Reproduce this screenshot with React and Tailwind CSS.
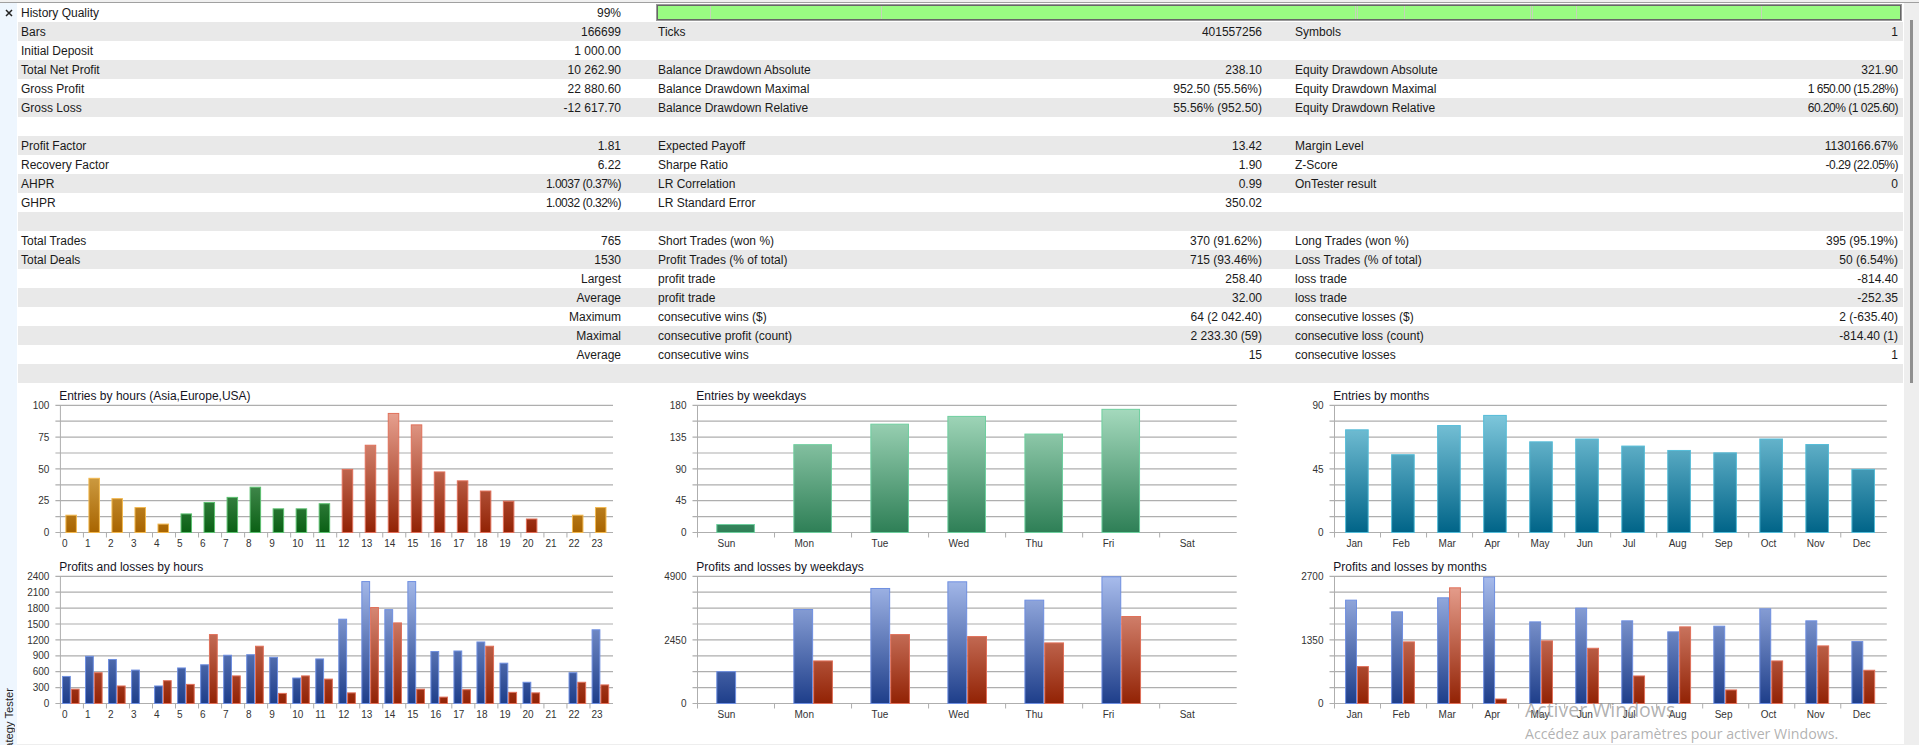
const rows = [
  { bar: true, a: ["History Quality", "99%"] },
  { a: ["Bars", "166699"], b: ["Ticks", "401557256"], c: ["Symbols", "1"] },
  { a: ["Initial Deposit", "1 000.00"] },
  { a: ["Total Net Profit", "10 262.90"], b: ["Balance Drawdown Absolute", "238.10"], c: ["Equity Drawdown Absolute", "321.90"] },
  { a: ["Gross Profit", "22 880.60"], b: ["Balance Drawdown Maximal", "952.50 (55.56%)"], c: ["Equity Drawdown Maximal", "1 650.00 (15.28%)"] },
  { a: ["Gross Loss", "-12 617.70"], b: ["Balance Drawdown Relative", "55.56% (952.50)"], c: ["Equity Drawdown Relative", "60.20% (1 025.60)"] },
  {},
  { a: ["Profit Factor", "1.81"], b: ["Expected Payoff", "13.42"], c: ["Margin Level", "1130166.67%"] },
  { a: ["Recovery Factor", "6.22"], b: ["Sharpe Ratio", "1.90"], c: ["Z-Score", "-0.29 (22.05%)"] },
  { a: ["AHPR", "1.0037 (0.37%)"], b: ["LR Correlation", "0.99"], c: ["OnTester result", "0"] },
  { a: ["GHPR", "1.0032 (0.32%)"], b: ["LR Standard Error", "350.02"] },
  {},
  { a: ["Total Trades", "765"], b: ["Short Trades (won %)", "370 (91.62%)"], c: ["Long Trades (won %)", "395 (95.19%)"] },
  { a: ["Total Deals", "1530"], b: ["Profit Trades (% of total)", "715 (93.46%)"], c: ["Loss Trades (% of total)", "50 (6.54%)"] },
  { a: ["", "Largest"], b: ["profit trade", "258.40"], c: ["loss trade", "-814.40"] },
  { a: ["", "Average"], b: ["profit trade", "32.00"], c: ["loss trade", "-252.35"] },
  { a: ["", "Maximum"], b: ["consecutive wins ($)", "64 (2 042.40)"], c: ["consecutive losses ($)", "2 (-635.40)"] },
  { a: ["", "Maximal"], b: ["consecutive profit (count)", "2 233.30 (59)"], c: ["consecutive loss (count)", "-814.40 (1)"] },
  { a: ["", "Average"], b: ["consecutive wins", "15"], c: ["consecutive losses", "1"] },
  {},
];

const NARROW = ["1.0037 (0.37%)", "1.0032 (0.32%)", "1 650.00 (15.28%)", "60.20% (1 025.60)", "-0.29 (22.05%)"];

const PAL = {
  orange: ["#fbe195", "#a86400", "#f2b84f"],
  green: ["#9ccaa8", "#0a6014", "#5cc070"],
  red: ["#ecA898", "#922204", "#e0705a"],
  blue: ["#a8bcec", "#1e3e8a", "#6f8fe0"],
  teal: ["#88cfe2", "#006488", "#55bcd8"],
  mint: ["#a8dcc0", "#2e7f56", "#6fcf9f"],
};

const hoursX = Array.from({ length: 24 }, (_, i) => String(i));
const daysX = ["Sun", "Mon", "Tue", "Wed", "Thu", "Fri", "Sat"];
const monthsX = ["Jan", "Feb", "Mar", "Apr", "May", "Jun", "Jul", "Aug", "Sep", "Oct", "Nov", "Dec"];

const hourEntries = [14, 43, 27, 20, 7, 15, 24, 28, 36, 19, 19, 23, 50, 69, 94, 85, 48, 41, 33, 25, 11, 0, 14, 20];
const hourColor = (i) => (i < 5 || i > 21 ? "orange" : i < 12 ? "green" : "red");

const charts = [
  [
    { title: "Entries by hours (Asia,Europe,USA)", left: 42.4, width: 552.6, max: 100, yl: { 0: "100", 2: "75", 4: "50", 6: "25", 8: "0" }, xl: hoursX, lx: 1.5,
      barX: 5, barW: 11.5, series: [{ v: hourEntries, color: hourColor }] },
    { title: "Profits and losses by hours", left: 42.4, width: 552.6, max: 2400, yl: { 0: "2400", 1: "2100", 2: "1800", 3: "1500", 4: "1200", 5: "900", 6: "600", 7: "300", 8: "0" }, xl: hoursX, lx: 1.5,
      barX: 1.6, barW: 8.8, series: [
        { v: [520, 900, 840, 640, 340, 680, 740, 920, 930, 880, 490, 850, 1600, 2310, 1780, 2310, 990, 1000, 1170, 770, 410, 0, 590, 1400], color: () => "blue" },
        { v: [280, 590, 340, 0, 440, 370, 1310, 530, 1090, 200, 530, 470, 210, 1820, 1530, 280, 130, 270, 1090, 220, 210, 0, 410, 360], color: () => "red" },
      ] },
  ],
  [
    { title: "Entries by weekdays", left: 57.5, width: 539.2, max: 180, yl: { 0: "180", 2: "135", 4: "90", 6: "45", 8: "0" }, xl: daysX, lx: 20,
      barX: 18.8, barW: 38.6, series: [{ v: [12, 125, 154, 165, 140, 175, 0], color: () => "mint" }] },
    { title: "Profits and losses by weekdays", left: 57.5, width: 539.2, max: 4900, yl: { 0: "4900", 4: "2450", 8: "0" }, xl: daysX, lx: 20,
      barX: 18.8, barW: 19.8, series: [
        { v: [1247, 3640, 4450, 4707, 4000, 4900, 0], color: () => "blue" },
        { v: [0, 1659, 2675, 2598, 2353, 3370, 0], color: () => "red" },
      ] },
  ],
  [
    { title: "Entries by months", left: 55.5, width: 552.3, max: 90, yl: { 0: "90", 4: "45", 8: "0" }, xl: monthsX, lx: 12,
      barX: 10.6, barW: 23.6, series: [{ v: [73, 55.4, 76, 83.2, 64.5, 66.5, 61.5, 58.4, 56.7, 66.5, 62.6, 45], color: () => "teal" }] },
    { title: "Profits and losses by months", left: 55.5, width: 552.3, max: 2700, yl: { 0: "2700", 4: "1350", 8: "0" }, xl: monthsX, lx: 12,
      barX: 10.6, barW: 11.9, series: [
        { v: [2204, 1956, 2254, 2693, 1743, 2034, 1765, 1531, 1651, 2020, 1765, 1325], color: () => "blue" },
        { v: [794, 1318, 2466, 106, 1339, 1183, 595, 1637, 298, 914, 1233, 716], color: () => "red" },
      ] },
  ],
];

function Chart({ c, id, colW }) {
  const top = 1.3;
  const H = 127.2;
  const bottom = top + H;
  const cell = c.width / c.xl.length;
  const axis = "#aeaeae";
  return (
    <div className="h-[171px]">
      <div className="h-[16px] text-[12px] leading-[16px] text-[#15151f] whitespace-nowrap" style={{ paddingLeft: c.left - 1.2 }}>{c.title}</div>
      <svg width={colW} height={155} className="block overflow-visible">
        <defs>
          {Object.entries(PAL).map(([k, p]) => (
            <linearGradient key={k} id={`${id}-${k}`} gradientUnits="userSpaceOnUse" x1="0" y1={top} x2="0" y2={bottom}>
              <stop offset="0" stopColor={p[0]} />
              <stop offset="1" stopColor={p[1]} />
            </linearGradient>
          ))}
        </defs>
        {Array.from({ length: 9 }, (_, i) => {
          const y = top + (i * H) / 8;
          return (
            <g key={i}>
              <line x1={c.left - 5} x2={c.left + c.width} y1={y} y2={y} stroke={axis} strokeWidth="1.2" />
              {c.yl[i] && (
                <text x={c.left - 11} y={y + 3.6} textAnchor="end" fontSize="10" fill="#333" fontFamily="'Liberation Sans', sans-serif">{c.yl[i]}</text>
              )}
            </g>
          );
        })}
        <line x1={c.left} x2={c.left} y1={top} y2={bottom} stroke={axis} />
        {c.xl.map((l, i) => {
          const x = c.left + i * cell;
          return (
            <g key={l}>
              <line x1={x} x2={x} y1={bottom} y2={bottom + 5} stroke={axis} />
              <text x={x + c.lx} y={bottom + 14} fontSize="10" fill="#333" fontFamily="'Liberation Sans', sans-serif">{l}</text>
            </g>
          );
        })}
        {c.series.map((s, si) =>
          s.v.map((v, i) => {
            if (!v) return null;
            const h = (v / c.max) * H;
            const col = s.color(i);
            const x = c.left + i * cell + c.barX + si * c.barW;
            return (
              <rect key={`${si}-${i}`} x={x + 0.5} y={bottom - h + 0.5} width={c.barW - 1} height={h - 0.5} fill={`url(#${id}-${col})`} stroke={PAL[col][2]} strokeWidth="1" />
            );
          })
        )}
      </svg>
    </div>
  );
}

function Cell({ d, pr }) {
  if (!d) return <div />;
  return (
    <div className={`flex justify-between min-w-0 pt-px ${pr}`}>
      <span className="whitespace-nowrap">{d[0]}</span>
      <span className={`whitespace-nowrap ${NARROW.includes(d[1]) ? "tracking-[-0.5px]" : ""}`}>{d[1]}</span>
    </div>
  );
}

const ticks = [52, 223, 699, 697, 746, 872, 874, 918, 1103];

export default function App() {
  const colW = [622, 639, 625];
  return (
    <div className="w-[1919px] h-[745px] overflow-hidden bg-[#eeeeee] flex flex-col text-[12px] text-[#1a1a1a]" style={{ fontFamily: "'Liberation Sans', Arial, sans-serif" }}>
      <div className="h-[2px] bg-[#f0f0f0] shrink-0" />
      <div className="h-[1px] bg-[#a0a0a0] shrink-0" />
      <div className="flex flex-1 min-h-0">
        <aside className="w-[17px] shrink-0 bg-[#eef6fe] flex flex-col items-center overflow-hidden">
          <svg width="8" height="8" viewBox="0 0 8 8" className="mt-[6px] shrink-0">
            <path d="M1 1 L7 7 M7 1 L1 7" stroke="#222" strokeWidth="1.5" />
          </svg>
          <div className="mt-[671px] shrink-0 [writing-mode:vertical-rl] rotate-180 whitespace-nowrap text-[11.2px] leading-[14px] text-[#222]">Strategy Tester</div>
        </aside>
        <main className="relative w-[1887px] shrink-0 bg-white pl-px border-b border-[#eeeeee]">
          {rows.map((r, i) => (
            <div key={i} className={`h-[19px] w-[1885px] grid grid-cols-[640px_637px_608px] leading-[19px] ${i % 2 ? "bg-[#e9e9e9]" : "bg-white"}`}>
              <Cell d={r.a} pr="pl-[3px] pr-[37px]" />
              {r.bar ? (
                <div className="col-span-2 relative h-[15px] mt-[2px] -ml-px mr-[2px] border border-[#666666] ring-1 ring-[#9a9a9a] bg-[#99fc82]">
                  {ticks.map((t) => (
                    <span key={t} className="absolute top-0 bottom-0 w-px bg-[#c4d4b8]" style={{ left: t }} />
                  ))}
                </div>
              ) : (
                <>
                  <Cell d={r.b} pr="pr-[33px]" />
                  <Cell d={r.c} pr="pr-[5px]" />
                </>
              )}
            </div>
          ))}
          <div className="grid grid-cols-[622px_639px_625px] pt-[5px]">
            {charts.map((col, ci) => (
              <div key={ci}>
                {col.map((c, ri) => (
                  <Chart key={ri} c={c} id={`c${ci}${ri}`} colW={colW[ci]} />
                ))}
              </div>
            ))}
          </div>
          <div className="absolute left-[1508px] top-[697px] text-[#8f8f8f]/70 pointer-events-none leading-none whitespace-nowrap" style={{ fontFamily: "'Open Sans', sans-serif" }}>
            <div className="text-[19.5px]">Activer Windows</div>
            <div className="text-[14.2px] mt-[7px]">Accédez aux paramètres pour activer Windows.</div>
          </div>
        </main>
        <div className="flex-1 flex justify-center pt-[17px]">
          <div className="w-[3px] h-[363px] bg-[#8f8f8f] ml-[-1px]" />
        </div>
      </div>
    </div>
  );
}
